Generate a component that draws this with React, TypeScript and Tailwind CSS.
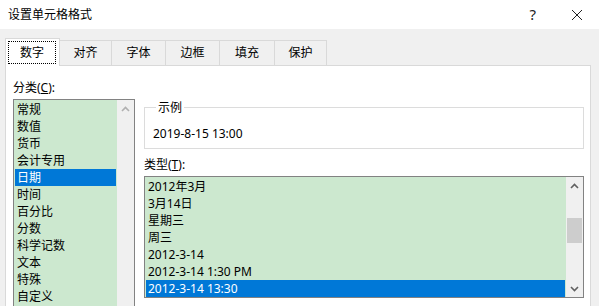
import React from "react";

const categories = ["常规", "数值", "货币", "会计专用", "日期", "时间", "百分比", "分数", "科学记数", "文本", "特殊", "自定义"];
const types = ["2012年3月", "3月14日", "星期三", "周三", "2012-3-14", "2012-3-14 1:30 PM", "2012-3-14 13:30"];
const tabs = [
    { label: "对齐", w: "w-[52px]" },
    { label: "字体", w: "w-[54px]" },
    { label: "边框", w: "w-[54px]" },
    { label: "填充", w: "w-[55px]" },
    { label: "保护", w: "w-[52px]" },
];

function Chevron({ up, color }: { up?: boolean; color: string }) {
    return (
        <svg width="9" height="6" viewBox="0 0 9 6">
            <polyline
                points={up ? "1,5 4.5,1.5 8,5" : "1,1 4.5,4.5 8,1"}
                fill="none"
                stroke={color}
                strokeWidth="1.6"
            />
        </svg>
    );
}

function Row({ text, selected }: { text: string; selected?: boolean }) {
    return (
        <div className={`h-[17px] leading-[17px] pl-[2px] whitespace-nowrap ${selected ? "bg-[#0078d7] text-white" : ""}`}>
            {text}
        </div>
    );
}

export default function App() {
    return (
        <div className="w-[599px] h-[306px] overflow-hidden bg-[#f0f0f0] text-[12px] text-black font-['Noto_Sans','Noto_Sans_CJK_SC',sans-serif] flex flex-col">
            {/* Title bar */}
            <div className="h-[29px] shrink-0 bg-white flex items-center pl-[8px]">
                <span className="flex-1 leading-none">设置单元格格式</span>
                <span className="text-[15px] leading-none mr-[35px] text-[#222]">?</span>
                <svg width="12" height="12" viewBox="0 0 12 12" className="mr-[16px]">
                    <path d="M1 1 L11 11 M11 1 L1 11" stroke="#222" strokeWidth="1" />
                </svg>
            </div>

            {/* Tabs */}
            <div className="h-[36px] shrink-0 flex items-end pl-[5px]">
                <div className="relative z-10 -mb-px h-[28px] w-[55px] bg-white border border-b-0 border-[#d9d9d9] pt-[2px] pl-[2px] pr-[3px]">
                    <div className="h-[23px] border border-dotted border-black flex items-center justify-center">数字</div>
                </div>
                {tabs.map((t) => (
                    <div key={t.label} className={`${t.w} h-[25px] border-t border-r border-[#d9d9d9] flex items-center justify-center`}>
                        {t.label}
                    </div>
                ))}
            </div>

            {/* Panel */}
            <div className="ml-[5px] w-[586px] flex-1 bg-white border border-[#d9d9d9] flex gap-[9px] pl-[7px] pt-[13px]">
                {/* Category column */}
                <div className="w-[122px] flex flex-col">
                    <div className="h-[17px] leading-[17px]">
                        分类(<span className="underline">C</span>):
                    </div>
                    <div className="mt-[3px] h-[230px] border border-[#828282] flex">
                        <div className="flex-1 bg-[#cce8cf] p-[1px]">
                            {categories.map((c) => (
                                <Row key={c} text={c} selected={c === "日期"} />
                            ))}
                        </div>
                        <div className="w-[17px] bg-[#f0f0f0] flex flex-col items-center">
                            <div className="h-[17px] flex items-center justify-center">
                                <Chevron up color="#b0b0b0" />
                            </div>
                        </div>
                    </div>
                </div>

                {/* Right column */}
                <div className="w-[440px] flex flex-col pt-[20px]">
                    <fieldset className="border border-[#dcdcdc] pl-[8px] pt-[9px] pb-[6px]">
                        <legend className="ml-[3px] px-[2px] leading-[17px]">示例</legend>
                        <div className="h-[17px] leading-[17px]">2019-8-15 13:00</div>
                    </fieldset>
                    <div className="mt-[7px] h-[17px] leading-[17px]">
                        类型(<span className="underline">T</span>):
                    </div>
                    <div className="mt-[3px] h-[122px] border border-[#828282] flex">
                        <div className="flex-1 bg-[#cce8cf] pt-[1px] px-[1px]">
                            {types.map((t, i) => (
                                <Row key={t} text={t} selected={i === types.length - 1} />
                            ))}
                        </div>
                        <div className="w-[17px] bg-[#f0f0f0] flex flex-col">
                            <div className="h-[17px] flex items-center justify-center">
                                <Chevron up color="#606060" />
                            </div>
                            <div className="flex-1 px-[1px]">
                                <div className="mt-[24px] h-[25px] bg-[#cdcdcd]" />
                            </div>
                            <div className="h-[17px] flex items-center justify-center">
                                <Chevron color="#606060" />
                            </div>
                        </div>
                    </div>
                </div>
            </div>
        </div>
    );
}
